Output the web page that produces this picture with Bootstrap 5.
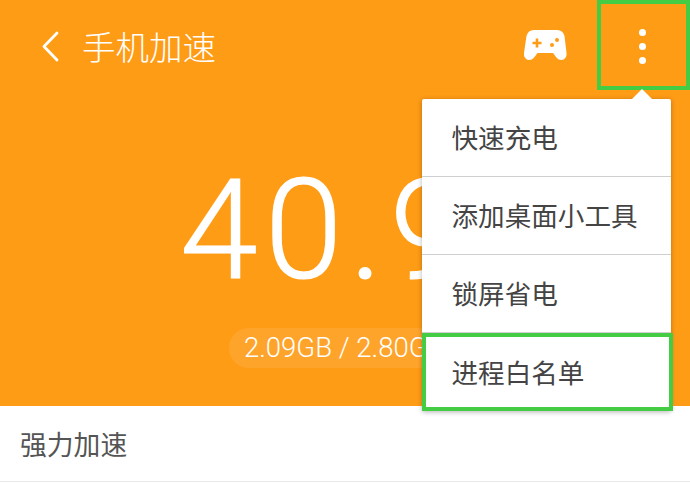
<!DOCTYPE html>
<html lang="zh"><head><meta charset="utf-8">
<link href="https://cdn.jsdelivr.net/npm/bootstrap@5.3.0/dist/css/bootstrap.min.css" rel="stylesheet">
<style>
html,body{width:690px;height:483px;overflow:hidden;background:#fff;font-family:Roboto,"Noto Sans CJK SC",sans-serif}
.stage{position:relative;width:690px;height:483px;overflow:hidden}
.hero{height:406px;background:#ff9c16;color:#fff}
.topbar{height:90px;padding-left:41px}
.back{width:19px;height:32px;margin-right:22px;margin-top:3px}
.ttl{font-size:33.500px;font-family:"Noto Sans CJK SC",sans-serif;font-weight:300;line-height:1;margin-top:1px}
.pad{margin-left:auto;width:44px;height:32px;margin-right:30px}
.more{width:93px;height:90px;border:4px solid #44cc44;padding-right:3px;padding-top:2px}
.more i{display:block;width:7px;height:7px;border-radius:50%;background:#fff;margin:3.500px 0}
.num{font-size:140px;font-weight:300;line-height:1;letter-spacing:7px;-webkit-text-stroke:1.200px #fff;width:422px;padding-left:180px;padding-top:4px;margin-top:66px;white-space:nowrap;height:139px;overflow:hidden}
.pill{margin:33px 0 0 229px;height:40px;width:193px;overflow:hidden;padding-left:15px;border-radius:20px 0 0 20px;background:rgba(255,255,255,.09);font-size:27.500px;line-height:39px;font-weight:300;white-space:nowrap}
.rowline{height:76px;border-bottom:1px solid #e8e8e8;padding-left:20px;font-size:26.800px;color:#555;font-family:"Noto Sans CJK SC",sans-serif;font-weight:400;line-height:75px}
.pop{position:absolute;left:422px;top:99px;width:249px;height:312px;background:#fff;border-radius:2px;box-shadow:0 1px 5px rgba(0,0,0,.3)}
.pop::before{content:"";position:absolute;right:18px;top:-10px;border:11px solid transparent;border-top:0;border-bottom-color:#fff}
.opt{height:78px;padding-left:29.500px;font-size:26.600px;line-height:76px;color:#444;font-family:"Noto Sans CJK SC",sans-serif;border-bottom:1px solid #cfcfcf}
.opt-hit{position:absolute;left:0;top:234px;width:251px;height:78px;border:4px solid #44cc44;padding-left:25.500px;line-height:70px;background:#fff}
</style></head><body>
<div class="stage">
<div class="hero">
<div class="topbar d-flex align-items-center">
<svg class="back" viewBox="0 0 19 32"><path d="M16 2 3 15.500 16 29" fill="none" stroke="#fff" stroke-width="2.800" stroke-linecap="round" stroke-linejoin="round"/></svg>
<div class="ttl">手机加速</div>
<svg class="pad" viewBox="0 -1 44 32"><path fill="#fff" d="M11 0h23c4 0 6.500 2 7.500 6l2 17c.5 4-2 7-5 7-2.500 0-4-1-5.500-3l-3-4H14.500l-3 4c-1.500 2-3 3-5.500 3-3 0-5.500-3-5-7l2.500-17c1-4 3.500-6 7.500-6Z"/><path fill="#ff9c16" d="M12.700 8.500h2.600v3.200h3.200v2.600h-3.200v3.200h-2.600v-3.200H9.500v-2.600h3.200Z"/><circle cx="29" cy="15" r="2" fill="#ff9c16"/><circle cx="34" cy="10" r="2" fill="#ff9c16"/></svg>
<div class="more d-flex flex-column align-items-center justify-content-center"><i></i><i></i><i></i></div>
</div>
<div class="num">40.9</div>
<div class="pill">2.09GB / 2.80GB</div>
</div>
<div class="rowline">强力加速</div>
<div class="pop">
<div class="opt">快速充电</div>
<div class="opt">添加桌面小工具</div>
<div class="opt">锁屏省电</div>
<div class="opt opt-hit">进程白名单</div>
</div>
</div>
</body></html>
